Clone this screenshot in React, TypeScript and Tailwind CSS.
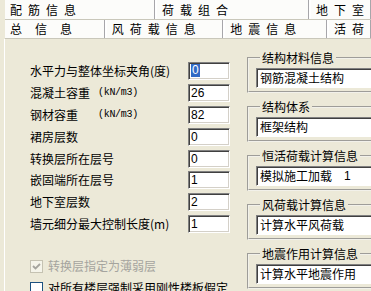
import React from "react";

const rows = [
  { label: "水平力与整体坐标夹角", unit: "(度)", value: "0", selected: true },
  { label: "混凝土容重", unit: "(kN/m3)", value: "26" },
  { label: "钢材容重", unit: "(kN/m3)", value: "82" },
  { label: "裙房层数", value: "0" },
  { label: "转换层所在层号", value: "0" },
  { label: "嵌固端所在层号", value: "1" },
  { label: "地下室层数", value: "2" },
  { label: "墙元细分最大控制长度", unit: "(m)", value: "1" },
];

const groups = [
  { title: "结构材料信息", value: "钢筋混凝土结构" },
  { title: "结构体系", value: "框架结构" },
  { title: "恒活荷载计算信息", value: "模拟施工加载", extra: "1" },
  { title: "风荷载计算信息", value: "计算水平风荷载" },
  { title: "地震作用计算信息", value: "计算水平地震作用" },
];

function Tab({ text, width, tracking, first }: { text: string; width: string; tracking: string; first?: boolean }) {
  return (
    <div
      className={`${width} h-full flex items-center bg-[#FCFCFA] border-r border-r-[#A7A6AA] ${
        first ? "" : "border-l-2 border-l-white"
      } pl-[5px] whitespace-nowrap ${tracking}`}
    >
      {text}
    </div>
  );
}

export default function App() {
  return (
    <div className="w-[371px] h-[291px] overflow-hidden bg-[#ECE9D8] text-[12px] leading-[16px] text-black font-['Noto_Sans_CJK_SC',sans-serif]">
      {/* tab strip */}
      <div className="pl-[5px]">
        <div className="flex h-[20px] border-b border-b-[#C9C7BA]">
          <Tab text="配筋信息" width="w-[153px]" tracking="tracking-[6px]" first />
          <Tab text="荷载组合" width="w-[157px]" tracking="tracking-[6px]" />
          <Tab text="地下室" width="flex-1" tracking="tracking-[6px]" />
        </div>
        <div className="flex h-[19px] border-b border-b-[#C9C7BA]">
          <Tab text="总信息" width="w-[101px]" tracking="tracking-[13px]" first />
          <Tab text="风荷载信息" width="w-[120px]" tracking="tracking-[6px]" />
          <Tab text="地震信息" width="w-[105px]" tracking="tracking-[6px]" />
          <Tab text="活荷" width="flex-1" tracking="tracking-[6px]" />
        </div>
      </div>

      {/* panel */}
      <div className="flex ml-[4px] border-l border-l-white h-[260px]">
        <div className="w-[242px] shrink-0 pl-[25px] pt-[21px] flex flex-col">
          {rows.map((r) => {
            const kn = r.unit?.startsWith("(kN");
            return (
              <div key={r.label} className="flex items-center h-[22px]">
                <div className="w-[158px] flex items-center whitespace-nowrap">
                  <span className={kn ? "w-[68px]" : ""}>{r.label}</span>
                  {r.unit &&
                    (kn ? (
                      <span className="font-['Liberation_Mono',monospace] text-[10px] tracking-[-0.3px]">{r.unit}</span>
                    ) : (
                      <span>{r.unit}</span>
                    ))}
                </div>
                <div className="w-[42px] h-[18px] bg-white border border-t-[#808080] border-l-[#808080] border-b-white border-r-white shadow-[inset_1px_1px_0_#404040,inset_-1px_-1px_0_#D4D0C8] flex items-center pl-[2px] font-['Liberation_Sans',sans-serif] text-[12px]">
                  {r.selected ? (
                    <span className="bg-[#316AC5] text-white px-[1px] leading-[13px]">{r.value}</span>
                  ) : (
                    <span>{r.value}</span>
                  )}
                </div>
              </div>
            );
          })}

          <div className="flex items-center h-[22px] mt-[20px] text-[#A5A49E]">
            <div className="w-[13px] h-[13px] border border-[#C5C2B2] bg-[#F5F4EA] flex items-center justify-center mr-[5px]">
              <svg width="9" height="9" viewBox="0 0 9 9">
                <path d="M1 4 L3.5 6.5 L8 2" stroke="#A5A49E" strokeWidth="1.8" fill="none" />
              </svg>
            </div>
            <span className="whitespace-nowrap">转换层指定为薄弱层</span>
          </div>
          <div className="flex items-center h-[22px]">
            <div className="w-[13px] h-[13px] border border-[#1C5180] bg-white mr-[5px] shrink-0" />
            <span className="whitespace-nowrap">对所有楼层强制采用刚性楼板假定</span>
          </div>
        </div>

        <div className="pt-[11px] flex flex-col gap-[6px] w-[150px] shrink-0">
          {groups.map((g) => (
            <fieldset
              key={g.title}
              className="border-2 [border-style:groove] border-[#F2F1EA] pl-[7px] pb-[3px] m-0"
            >
              <legend className="ml-[4px] px-[2px] leading-[16px] whitespace-nowrap">{g.title}</legend>
              <div className="mt-[2px] h-[20px] bg-white border border-t-[#808080] border-l-[#808080] border-b-white border-r-white shadow-[inset_1px_1px_0_#404040] flex items-center pl-[3px] whitespace-nowrap">
                {g.value}
                {g.extra && <span className="ml-[12px] font-['Liberation_Sans',sans-serif]">{g.extra}</span>}
              </div>
            </fieldset>
          ))}
        </div>
      </div>
    </div>
  );
}
